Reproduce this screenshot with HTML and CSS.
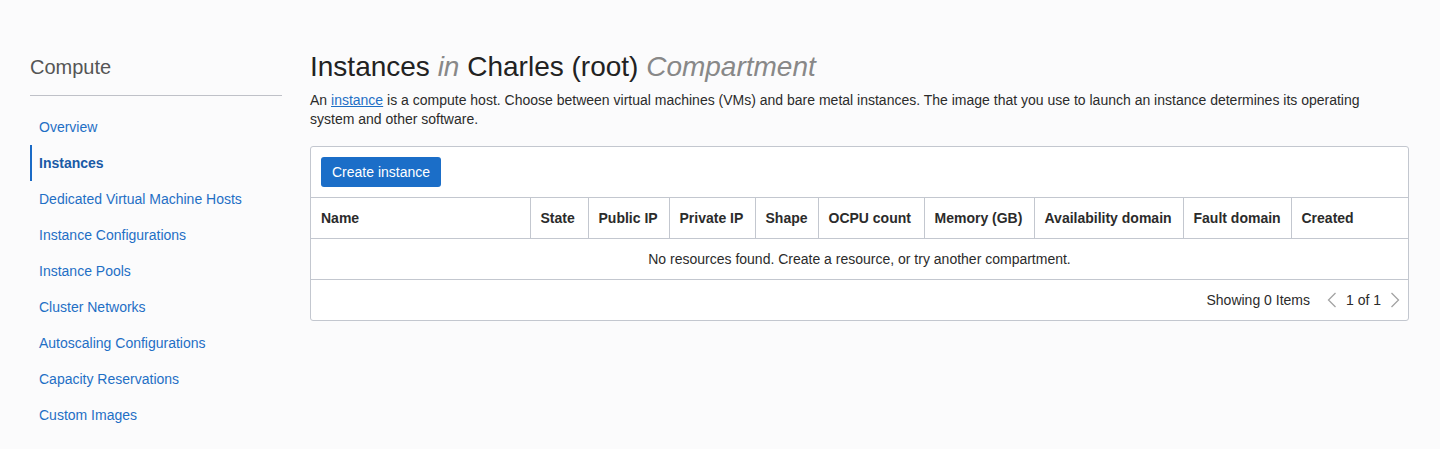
FILE: index.html
```html
<!DOCTYPE html>
<html lang="en">
<head>
<meta charset="utf-8">
<title>Instances</title>
<link rel="stylesheet" href="styles.css">
</head>
<body>
<div class="page">
  <aside class="sidebar">
    <h2 class="side-title">Compute</h2>
    <nav class="side-nav">
      <a class="nav-item" href="#">Overview</a>
      <a class="nav-item active" href="#">Instances</a>
      <a class="nav-item" href="#">Dedicated Virtual Machine Hosts</a>
      <a class="nav-item" href="#">Instance Configurations</a>
      <a class="nav-item" href="#">Instance Pools</a>
      <a class="nav-item" href="#">Cluster Networks</a>
      <a class="nav-item" href="#">Autoscaling Configurations</a>
      <a class="nav-item" href="#">Capacity Reservations</a>
      <a class="nav-item" href="#">Custom Images</a>
    </nav>
  </aside>
  <main class="main">
    <h1 class="title">Instances <em class="muted">in</em> Charles (root) <em class="muted">Compartment</em></h1>
    <p class="desc">An <a href="#" class="link">instance</a> is a compute host. Choose between virtual machines (VMs) and bare metal instances. The image that you use to launch an instance determines its operating system and other software.</p>
    <section class="panel">
      <div class="toolbar">
        <button class="btn">Create instance</button>
      </div>
      <table class="grid">
        <colgroup>
          <col class="c-name"><col class="c-state"><col class="c-pub"><col class="c-priv"><col class="c-shape"><col class="c-ocpu"><col class="c-mem"><col class="c-ad"><col class="c-fd"><col class="c-created">
        </colgroup>
        <thead>
          <tr>
            <th>Name</th><th>State</th><th>Public IP</th><th>Private IP</th><th>Shape</th><th>OCPU count</th><th>Memory (GB)</th><th>Availability domain</th><th>Fault domain</th><th>Created</th>
          </tr>
        </thead>
        <tbody>
          <tr><td colspan="10" class="empty">No resources found. Create a resource, or try another compartment.</td></tr>
        </tbody>
      </table>
      <div class="footer">
        <span class="count">Showing 0 Items</span>
        <span class="pager">
          <svg class="chev" width="10" height="16" viewBox="0 0 10 16"><path d="M8.5 1 L1.5 8 L8.5 15" fill="none" stroke="#a3a3a3" stroke-width="1.3"/></svg>
          <span class="pages">1 of 1</span>
          <svg class="chev" width="10" height="16" viewBox="0 0 10 16"><path d="M1.5 1 L8.5 8 L1.5 15" fill="none" stroke="#a3a3a3" stroke-width="1.3"/></svg>
        </span>
      </div>
    </section>
  </main>
</div>
</body>
</html>
```
FILE: styles.css
```css
* { box-sizing: border-box; }
html, body { margin: 0; padding: 0; }
body {
  background: #fbfbfc;
  font-family: "Liberation Sans", Arial, Helvetica, sans-serif;
  color: #2b2b2b;
  font-size: 14px;
}
.page {
  display: flex;
  gap: 28px;
  padding: 46px 31px 0 30px;
}
.sidebar {
  width: 252px;
  flex: none;
}
.side-title {
  margin: 8px 0 0;
  font-size: 20px;
  font-weight: 300;
  color: #555;
  line-height: 26px;
  padding-bottom: 15px;
  border-bottom: 1px solid #bfc1c8;
}
.side-nav {
  display: flex;
  flex-direction: column;
  padding-top: 13px;
}
.nav-item {
  display: flex;
  align-items: center;
  height: 36px;
  padding-left: 9px;
  color: #1f6fc5;
  text-decoration: none;
  font-size: 14px;
}
.nav-item.active {
  font-weight: bold;
  color: #1a5aa6;
  border-left: 2px solid #1a6ac6;
  padding-left: 7px;
}
.main {
  flex: 1;
  min-width: 0;
  padding-top: 2px;
}
.title {
  margin: 0;
  font-size: 28px;
  font-weight: normal;
  line-height: 38px;
  color: #222;
}
.muted {
  color: #888;
  font-style: italic;
}
.desc {
  margin: 5px 0 17px;
  max-width: 1080px;
  line-height: 19px;
  font-size: 14px;
  color: #2b2b2b;
}
.link { color: #1f6fc5; }
.panel {
  background: #fff;
  border: 1px solid #c3c7cf;
  border-radius: 3px;
}
.toolbar {
  padding: 10px 10px;
  border-bottom: 1px solid #c3c7cf;
}
.btn {
  display: block;
  height: 30px;
  width: 120px;
  padding: 0;
  border: none;
  border-radius: 3px;
  background: #1b6ec8;
  color: #fff;
  font-family: inherit;
  font-size: 14px;
}
.grid {
  width: 100%;
  border-collapse: collapse;
  table-layout: fixed;
}
.c-name { width: 219px; }
.c-state { width: 58px; }
.c-pub { width: 81px; }
.c-priv { width: 86px; }
.c-shape { width: 63px; }
.c-ocpu { width: 106px; }
.c-mem { width: 110px; }
.c-ad { width: 149px; }
.c-fd { width: 108px; }
.c-created { width: auto; }
.grid th {
  height: 40px;
  padding: 0 10px;
  text-align: left;
  font-size: 14px;
  font-weight: bold;
  color: #2b2b2b;
  border-right: 1px solid #c3c7cf;
  border-bottom: 1px solid #c3c7cf;
  white-space: nowrap;
}
.grid th:last-child { border-right: none; }
.grid td.empty {
  height: 41px;
  text-align: center;
  font-size: 14px;
  color: #2b2b2b;
  border-bottom: 1px solid #c3c7cf;
}
.footer {
  height: 40px;
  display: flex;
  align-items: center;
  justify-content: flex-end;
  padding-right: 8px;
  gap: 17px;
  font-size: 14px;
  color: #2b2b2b;
}
.pager {
  display: flex;
  align-items: center;
  gap: 9px;
}
.chev { display: block; }
```
